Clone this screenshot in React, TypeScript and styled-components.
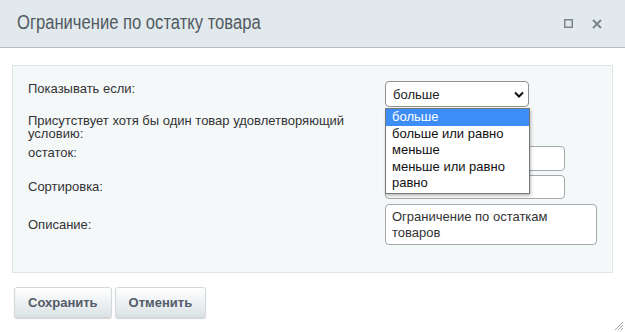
import styled, { createGlobalStyle } from 'styled-components';

const GlobalStyle = createGlobalStyle`
  html, body {
    margin: 0;
    padding: 0;
    background: #ffffff;
    font-family: "Liberation Sans", Arial, sans-serif;
  }
`;

const Dialog = styled.div`
  width: 625px;
  height: 332px;
  position: relative;
  background: #ffffff;
  overflow: hidden;
`;

const Header = styled.div`
  height: 47px;
  display: flex;
  align-items: center;
  justify-content: space-between;
  padding: 0 23px 0 17px;
  background: #e2e9ec;
  border-bottom: 1px solid #b7bec2;
`;

const Title = styled.h1`
  margin: 0 0 2px;
  font-size: 20px;
  font-weight: normal;
  color: #515a62;
  transform: scaleX(0.83);
  transform-origin: left center;
`;

const HeaderTools = styled.div`
  display: flex;
  align-items: center;
  gap: 19px;
  color: #7b858c;
`;

const Body = styled.div`
  padding: 17px 12px 0;
`;

const Panel = styled.div`
  position: relative;
  background: #f5f8f9;
  border: 1px solid #e0e5e7;
  padding: 15px 0 27px 15px;
  display: flex;
  flex-direction: column;
`;

const Row = styled.div<{ $gap: number; $center?: boolean }>`
  display: grid;
  grid-template-columns: 357px 1fr;
  align-items: ${(p) => (p.$center ? 'center' : 'start')};
  margin-top: ${(p) => p.$gap}px;
`;

const Label = styled.div<{ $h?: number }>`
  font-size: 13px;
  line-height: ${(p) => p.$h ?? 16}px;
  color: #333333;
`;

const Control = styled.div`
  position: relative;
`;

const SelectBox = styled.div`
  width: 144px;
  height: 26px;
  box-sizing: border-box;
  border: 1px solid #8f8f8f;
  border-radius: 4px;
  background: #ffffff;
  display: flex;
  align-items: center;
  justify-content: space-between;
  padding: 0 4px 0 7px;
  font-size: 13px;
  color: #222;
`;

const OptionList = styled.ul`
  position: absolute;
  top: 27px;
  left: 0;
  width: 145px;
  box-sizing: border-box;
  margin: 0;
  padding: 0 0 1px;
  list-style: none;
  background: #ffffff;
  border: 1px solid #767676;
  box-shadow: 1px 2px 3px rgba(0, 0, 0, 0.25);
  z-index: 5;
`;

const OptionItem = styled.li<{ $active?: boolean }>`
  font-size: 13px;
  line-height: 16.6px;
  padding: 0 6px;
  color: ${(p) => (p.$active ? '#ffffff' : '#111111')};
  background: ${(p) => (p.$active ? '#3c8df5' : 'transparent')};
`;

const TextInput = styled.div<{ $h: number }>`
  width: 180px;
  height: ${(p) => p.$h}px;
  box-sizing: border-box;
  border: 1px solid #a3a9ad;
  border-radius: 4px;
  background: #ffffff;
`;

const TextArea = styled.div`
  width: 212px;
  height: 41px;
  box-sizing: border-box;
  border: 1px solid #a3a9ad;
  border-radius: 4px;
  background: #ffffff;
  padding: 4px 6px;
  font-size: 13px;
  line-height: 16px;
  color: #333;
`;

const Footer = styled.div`
  display: flex;
  gap: 3px;
  padding: 14px 0 0 14px;
`;

const Button = styled.button`
  height: 31px;
  padding: 0 13px;
  font-family: "Liberation Sans", Arial, sans-serif;
  font-size: 13px;
  font-weight: bold;
  color: #535c69;
  background: linear-gradient(#ffffff, #dbe2e5);
  border: 1px solid #d1d8db;
  border-radius: 3px;
  box-shadow: 0 1px 1px rgba(0, 0, 0, 0.18);
`;

const Grip = styled.svg`
  position: absolute;
  right: 2px;
  bottom: 2px;
`;

const options = ['больше', 'больше или равно', 'меньше', 'меньше или равно', 'равно'];

export default function App() {
  return (
    <Dialog>
      <GlobalStyle />
      <Header>
        <Title>Ограничение по остатку товара</Title>
        <HeaderTools>
          <svg width="9" height="9" viewBox="0 0 9 9">
            <rect x="0.75" y="0.75" width="7.5" height="7.5" fill="none" stroke="#7b858c" strokeWidth="1.5" />
          </svg>
          <svg width="10" height="10" viewBox="0 0 10 10">
            <path d="M1 1 L9 9 M9 1 L1 9" stroke="#7b858c" strokeWidth="2" />
          </svg>
        </HeaderTools>
      </Header>
      <Body>
        <Panel>
          <Row $gap={0}>
            <Label>Показывать если:</Label>
            <Control>
              <SelectBox>
                больше
                <svg width="10" height="7" viewBox="0 0 10 7">
                  <path d="M1 1.5 L5 5.5 L9 1.5" fill="none" stroke="#111" strokeWidth="2" />
                </svg>
              </SelectBox>
              <OptionList>
                {options.map((o, i) => (
                  <OptionItem key={o} $active={i === 0}>{o}</OptionItem>
                ))}
              </OptionList>
            </Control>
          </Row>
          <Row $gap={7}>
            <Label $h={13}>Присутствует хотя бы один товар удовлетворяющий условию:</Label>
          </Row>
          <Row $gap={6}>
            <Label $h={14}>остаток:</Label>
            <TextInput $h={25} />
          </Row>
          <Row $gap={4} $center>
            <Label>Сортировка:</Label>
            <TextInput $h={24} />
          </Row>
          <Row $gap={5} $center>
            <Label>Описание:</Label>
            <TextArea>Ограничение по остаткам товаров</TextArea>
          </Row>
        </Panel>
      </Body>
      <Footer>
        <Button>Сохранить</Button>
        <Button>Отменить</Button>
      </Footer>
      <Grip width="8" height="8" viewBox="0 0 8 8">
        <path d="M8 0 L0 8 M8 3 L3 8 M8 6 L6 8" stroke="#a0a6aa" strokeWidth="1" />
      </Grip>
    </Dialog>
  );
}
